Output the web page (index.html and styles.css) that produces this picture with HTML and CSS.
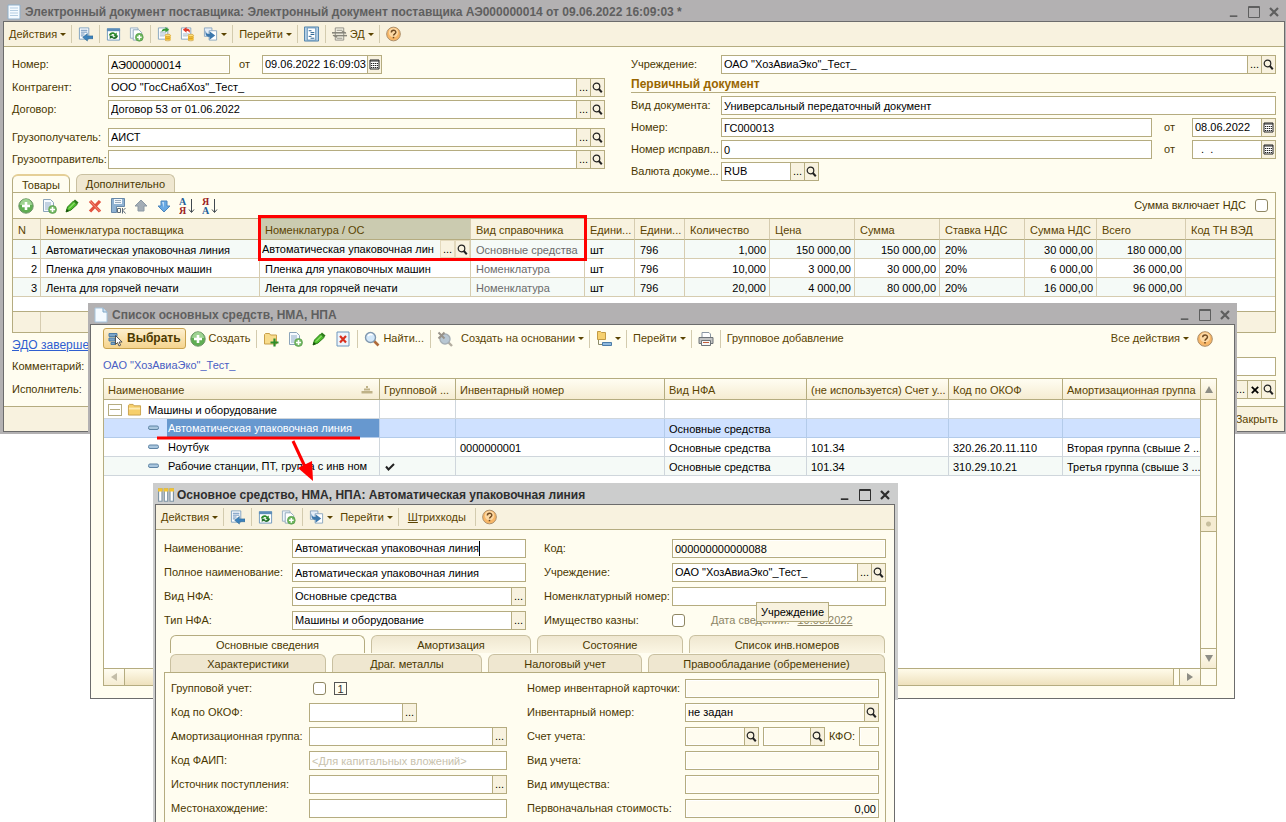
FILE: index.html
```html
<!DOCTYPE html>
<html lang="ru">
<head>
<meta charset="utf-8">
<title>Электронный документ поставщика</title>
<link rel="stylesheet" href="styles.css">
</head>
<body>
<svg class="sprite" aria-hidden="true">
  <symbol id="i-doc" viewBox="0 0 14 16"><path d="M1 1h12v14H1z" fill="#f4faff" stroke="#8fb0cc"/><path d="M3 4h8M3 6.500h8M3 9h8M3 11.500h8" stroke="#b4cde2"/></symbol>
  <symbol id="i-page" viewBox="0 0 14 16"><path d="M1 1h8l4 4v10H1z" fill="#f4faff" stroke="#a6c4dc"/><path d="M9 1v4h4" fill="#cfe2f2" stroke="#7fa6c6"/></symbol>
  <symbol id="i-table" viewBox="0 0 14 14"><path d="M.5 1.500h3v11h-3zM5.500 1.500h3v11h-3zM10.500 1.500h3v11h-3z" fill="#fff" stroke="#7d93a3"/><path d="M0 1h4v3H0zM5 1h4v3H5zM10 1h4v3h-4z" fill="#f3c331"/></symbol>
  <symbol id="i-save" viewBox="0 0 16 16"><path d="M1.500 1.500h10v12h-10z" fill="#fff" stroke="#7c9fc0"/><path d="M3 4h7M3 6h7M3 8h4M3 10h3" stroke="#5d88b4"/><path d="M5 11.500l5-4v2.500h6v3h-6v2.500z" fill="#3b82bd" stroke="#2a648f" stroke-width=".6"/></symbol>
  <symbol id="i-refresh" viewBox="0 0 16 16"><path d="M1.500 2.500h13v12h-13z" fill="#fff" stroke="#6f98bd"/><path d="M1 2h14v3H1z" fill="#5c8db9"/><path d="M3 9.500c1-4 5-4 7-2l1.500-1v4H8L9 8.800C8 7.500 6 8 5.500 9.500z" fill="#2c8a2c"/><path d="M13 9.500c-1 4.500-5.500 4.500-7.500 2.500L4 13.500V9.800h4L6.800 11c1.200 1 3 .8 3.500-1.500z" fill="#1f6e2a"/></symbol>
  <symbol id="i-copy" viewBox="0 0 16 16"><path d="M1.500 1.500h8v11h-8z" fill="#eef4fa" stroke="#9bb0c2"/><path d="M4.500 3.500h6l3 3v8h-9z" fill="#fff" stroke="#8da6bb"/><circle cx="11" cy="11.500" r="4.200" fill="#6cb65c" stroke="#4c9140" stroke-width=".6"/><path d="M11 9v5M8.500 11.500h5" stroke="#fff" stroke-width="1.600"/></symbol>
  <symbol id="i-docplus" viewBox="0 0 16 16"><path d="M2.500 1.500h7l3 3v9h-10z" fill="#f6faff" stroke="#8ca5ba"/><path d="M4 5h6M4 7h6M4 9h4M4 11h3" stroke="#8ca9c4"/><circle cx="11.500" cy="11.500" r="4" fill="#74ba64" stroke="#4c9140" stroke-width=".6"/><path d="M11.500 9v5M9 11.500h5" stroke="#fff" stroke-width="1.600"/></symbol>
  <symbol id="i-coins" viewBox="0 0 16 16"><path d="M1.500 1.500h10v12h-10z" fill="#fff" stroke="#86a4bf"/><path d="M3 6h7M3 8h7M3 10h5" stroke="#9db4ca"/><path d="M5 6C5 3 7 2.500 9 2.500V.5l4 3-4 3v-2C7.500 4.500 6 4.500 5 6z" fill="#379a37"/><path d="M8.500 9.500h6v5h-6z" fill="#f5bf35"/><ellipse cx="11.500" cy="9.500" rx="3" ry="1.300" fill="#ffe07a" stroke="#c48f1c" stroke-width=".6"/><path d="M8.500 12c1 1 5 1 6 0M8.500 14.500c1 1 5 1 6 0" fill="none" stroke="#c48f1c" stroke-width=".7"/></symbol>
  <symbol id="i-uncoins" viewBox="0 0 16 16"><path d="M1.500 1.500h10v12h-10z" fill="#fff" stroke="#86a4bf"/><path d="M3 8h7M3 10h5" stroke="#9db4ca"/><path d="M10 7C10 5 8.500 4.700 7 4.700v2l-4-3.200L7 .5v2c3 0 4.500 1.500 3 4.500z" fill="#e03b2c"/><path d="M8.500 9.500h6v5h-6z" fill="#f5bf35"/><ellipse cx="11.500" cy="9.500" rx="3" ry="1.300" fill="#ffe07a" stroke="#c48f1c" stroke-width=".6"/><path d="M8.500 12c1 1 5 1 6 0M8.500 14.500c1 1 5 1 6 0" fill="none" stroke="#c48f1c" stroke-width=".7"/></symbol>
  <symbol id="i-based" viewBox="0 0 16 16"><path d="M1.500 1.500h8v9h-8z" fill="#e4eef8" stroke="#8ba6bf"/><path d="M6.500 4.500h8v10h-8z" fill="#fff" stroke="#8ba6bf"/><path d="M3 4c0 3 1 4 4 4V5l6 4.500L7 14v-3C3 11 2 8 3 4z" fill="#3c78ac"/></symbol>
  <symbol id="i-list" viewBox="0 0 16 16"><path d="M.5.500h15v15H.5z" fill="#b5d0e6" stroke="#4b7fa9"/><path d="M3.500 1.500h9v13h-9z" fill="#fff" stroke="#5d8fb8"/><path d="M5 4.500h3M7 6.500h4M7 8.500h4M5 10.500h3M7 12.500h4" stroke="#1d5a8a"/></symbol>
  <symbol id="i-ed" viewBox="0 0 16 16"><path d="M3.500 1.500h9v13h-9z" fill="#f4f1e4" stroke="#8f8d84"/><path d="M5 4h6M5 12.500h6" stroke="#8f8d84"/><path d="M0 6.500h11V5l4 2H0zM16 10H5v1.500L1 9.500h15z" fill="#858379" stroke="#858379"/></symbol>
  <symbol id="i-help" viewBox="0 0 16 16"><circle cx="8" cy="8" r="7.300" fill="#f8b768" stroke="#a98b66"/><circle cx="8" cy="6.500" r="5" fill="#fdd9a4"/><path d="M5.700 6.300c0-3 4.800-3 4.800-.2C10.500 7.800 8 7.900 8 9.700" fill="none" stroke="#6f4a22" stroke-width="1.500"/><path d="M7.200 11h1.600v1.600H7.200z" fill="#6f4a22"/></symbol>
  <symbol id="i-plus" viewBox="0 0 16 16"><circle cx="8" cy="8" r="7.200" fill="#5fae52" stroke="#6e9468"/><path d="M2 7a6 6 0 0 1 12 0z" fill="#9fd392"/><path d="M8 4v8M4 8h8" stroke="#fff" stroke-width="2.600"/></symbol>
  <symbol id="i-pencil" viewBox="0 0 16 16"><path d="M2 14l1.500-5L9.500 3l3.500 3.500L7 12z" fill="#4fc02c" stroke="#2b7b19"/><path d="M5 10.500L11 4.500" stroke="#b4ef93"/><path d="M9.500 3l1.500-1.500 3.500 3-1.500 2z" fill="#2b7b19"/><path d="M2 14l.8-3 2.200 2z" fill="#174a0c"/></symbol>
  <symbol id="i-del" viewBox="0 0 16 16"><path d="M3 3l10 10.500M13 3L3 13.500" stroke="#e2533f" stroke-width="3.200"/><path d="M3 3l10 10.500" stroke="#f58d7c"/></symbol>
  <symbol id="i-saveok" viewBox="0 0 16 16"><path d="M1.500.500h13v8h-8v6h-5z" fill="#8fb2d2" stroke="#6788a8"/><path d="M4 1h8v5H4z" fill="#f3f8fc"/><path d="M5 2.500h6M5 4.500h6" stroke="#9ab"/><path d="M7.500 10.500h3v4h-3zM12.500 10v5.500M15.500 10l-2.500 2.500 2.500 3" fill="none" stroke="#5d6b78"/></symbol>
  <symbol id="i-up" viewBox="0 0 16 16"><path d="M8 2l6 6h-3v5H5V8H2z" fill="#a3adb5" stroke="#8b98a3"/></symbol>
  <symbol id="i-down" viewBox="0 0 16 16"><path d="M8 14L2 8h3V3h6v5h3z" fill="#67a9e4" stroke="#4f86bb"/><path d="M6 4h2v6z" fill="#bcdcf7"/></symbol>
  <symbol id="i-az" viewBox="0 0 16 18"><text x="0" y="8" class="sort-a">А</text><text x="0" y="17" class="sort-b">Я</text><path d="M12.500 2v13M10 12.500l2.500 3 2.500-3" fill="none" stroke="#40484f"/></symbol>
  <symbol id="i-za" viewBox="0 0 16 18"><text x="0" y="8" class="sort-b">Я</text><text x="0" y="17" class="sort-a">А</text><path d="M12.500 2v13M10 12.500l2.500 3 2.500-3" fill="none" stroke="#40484f"/></symbol>
  <symbol id="i-folder" viewBox="0 0 16 14"><path d="M1.500 2.500l1-1h4l1 1.500h7v10h-13z" fill="#f6cf6c" stroke="#c8a04a"/><path d="M2 5h12v2H2z" fill="#fdebb3"/></symbol>
  <symbol id="i-folderplus" viewBox="0 0 16 16"><path d="M1.500 3.500l1-1h4l1 1.500h6v9h-12z" fill="#f8dc8c" stroke="#c8a04a"/><path d="M11.500 7.500v8M7.500 11.500h8" stroke="#2f8d2b" stroke-width="2.200"/></symbol>
  <symbol id="i-docx" viewBox="0 0 14 16"><path d="M1 1h12v14H1z" fill="#eef5fc" stroke="#6f97bd"/><path d="M4 5l6 6.500M10 5l-6 6.500" stroke="#d9301f" stroke-width="2.200"/></symbol>
  <symbol id="i-find" viewBox="0 0 16 16"><path d="M10 10l4.500 4.500" stroke="#b06a3a" stroke-width="2.600"/><circle cx="6.500" cy="6.500" r="5" fill="#d3e8fa" stroke="#8198ae" stroke-width="1.400"/><path d="M4 5c1-1.500 3-2 4.500-1" fill="none" stroke="#fff" stroke-width="1.400"/></symbol>
  <symbol id="i-unfind" viewBox="0 0 16 16"><path d="M11 11l4 4" stroke="#b3ada0" stroke-width="2.400"/><circle cx="8" cy="8" r="5" fill="#b8c7d3" stroke="#a5aeb5" stroke-width="1.400"/><path d="M1.500 1.500l6 6M7.500 1.500l-6 6" stroke="#98938a" stroke-width="2"/></symbol>
  <symbol id="i-tree" viewBox="0 0 16 16"><path d="M1.500.500h3l1 1h4v7h-8z" fill="#f6d06e" stroke="#c39b44"/><path d="M2.500 9v4.500H6" fill="none" stroke="#8b8b6a"/><path d="M6.500 11.500h9v3h-9z" fill="#8fb9de" stroke="#4c7ca8"/></symbol>
  <symbol id="i-print" viewBox="0 0 16 16"><path d="M4 1.500h7l1.500 1.500v4H4z" fill="#fff" stroke="#8b97a3"/><path d="M1 6.500h14v6H1z" fill="#c3c4c4" stroke="#6f7478"/><path d="M3.500 9.500h9v5h-9z" fill="#f7f7f7" stroke="#6f7478"/><path d="M5 11.500h6" stroke="#c25d3a"/></symbol>
  <symbol id="i-select" viewBox="0 0 16 16"><path d="M1 2.500h8v3H1zM1 7h6v3H1zM3 11.500h4v2H3z" fill="#7da6c9" stroke="#4f7ea6"/><path d="M7.500 4.500v9l2-2 1.500 3.500 1.600-.8-1.500-3.200h3z" fill="#fff" stroke="#444" stroke-width=".9"/></symbol>
  <symbol id="i-mag" viewBox="0 0 11 11"><circle cx="4.500" cy="4.500" r="3.300" fill="none" stroke="#222" stroke-width="1.200"/><path d="M6.800 7l3 3.200" stroke="#222" stroke-width="2"/></symbol>
  <symbol id="i-cal" viewBox="0 0 11 11"><path d="M1 1h9v9H1z" fill="#fff" stroke="#222"/><path d="M1 2h9M2 4.500h7M2 6.500h7M2 8.500h7" stroke="#222"/><path d="M3.500 3v6M5.500 3v6M7.500 3v6" stroke="#fff" stroke-width=".7"/></symbol>
  <symbol id="i-item" viewBox="0 0 12 6"><rect x=".5" y="1" width="10" height="3.500" rx="1.500" fill="#a9c6de" stroke="#5f84a5"/></symbol>
  <symbol id="i-sorted" viewBox="0 0 12 8"><path d="M5 0h2v2H5zM3 2.500h6v2H3zM.5 5h11v2.500H.500z" fill="#bfb287"/></symbol>
  <symbol id="i-check" viewBox="0 0 10 8"><path d="M1 3.500l2.500 3L9 1" fill="none" stroke="#222" stroke-width="2"/></symbol>
  <symbol id="i-min" viewBox="0 0 10 12"><path d="M0 10h9v2H0z" fill="currentColor"/></symbol>
  <symbol id="i-max" viewBox="0 0 12 12"><path d="M.5.500h11v11H.5zM0 1.500h12" fill="none" stroke="currentColor"/></symbol>
  <symbol id="i-close" viewBox="0 0 10 10"><path d="M1 1l8 8M9 1L1 9" stroke="currentColor" stroke-width="2.200"/></symbol>
</svg>

<main class="desktop">

<section class="win win-doc">
  <header class="titlebar">
    <svg class="ico title-ico"><use href="#i-doc"/></svg>
    <h1 class="title">Электронный документ поставщика: Электронный документ поставщика АЭ000000014 от 09.06.2022 16:09:03 *</h1>
    <button class="wbtn" aria-label="Свернуть"><svg class="w10"><use href="#i-min"/></svg></button>
    <button class="wbtn" aria-label="Развернуть"><svg class="w12"><use href="#i-max"/></svg></button>
    <button class="wbtn" aria-label="Закрыть окно"><svg class="w10"><use href="#i-close"/></svg></button>
  </header>
  <div class="frame">
    <nav class="toolbar">
      <button class="tb menu">Действия<i class="caret"></i></button><i class="sep"></i>
      <button class="tb" aria-label="Записать"><svg class="ico"><use href="#i-save"/></svg></button><i class="sep"></i>
      <button class="tb" aria-label="Обновить"><svg class="ico"><use href="#i-refresh"/></svg></button>
      <button class="tb" aria-label="Скопировать"><svg class="ico"><use href="#i-copy"/></svg></button><i class="sep"></i>
      <button class="tb" aria-label="Провести"><svg class="ico"><use href="#i-coins"/></svg></button>
      <button class="tb" aria-label="Отменить проведение"><svg class="ico"><use href="#i-uncoins"/></svg></button>
      <button class="tb menu" aria-label="На основании"><svg class="ico"><use href="#i-based"/></svg><i class="caret"></i></button><i class="sep"></i>
      <button class="tb menu">Перейти<i class="caret"></i></button><i class="sep"></i>
      <button class="tb" aria-label="Список"><svg class="ico"><use href="#i-list"/></svg></button><i class="sep"></i>
      <button class="tb menu"><svg class="ico"><use href="#i-ed"/></svg>ЭД<i class="caret"></i></button><i class="sep"></i>
      <button class="tb" aria-label="Справка"><svg class="ico"><use href="#i-help"/></svg></button>
    </nav>
    <div class="doc-body">
      <div class="doc-form">
        <div class="col">
          <div class="row"><label for="num">Номер:</label>
            <div class="line">
              <input id="num" class="box ro num" value="АЭ000000014" readonly>
              <label for="dt" class="from">от</label>
              <div class="combo date-time"><input id="dt" value="09.06.2022 16:09:03"><button aria-label="Календарь"><svg><use href="#i-cal"/></svg></button></div>
            </div></div>
          <div class="row second"><label for="agent">Контрагент:</label>
            <div class="combo"><input id="agent" value='ООО "ГосСнабХоз"_Тест_'><button>...</button><button aria-label="Открыть"><svg><use href="#i-mag"/></svg></button></div></div>
          <div class="row"><label for="contract">Договор:</label>
            <div class="combo"><input id="contract" value="Договор 53 от 01.06.2022"><button>...</button><button aria-label="Открыть"><svg><use href="#i-mag"/></svg></button></div></div>
          <div class="row apart"><label for="to">Грузополучатель:</label>
            <div class="combo"><input id="to" value="АИСТ"><button>...</button><button aria-label="Открыть"><svg><use href="#i-mag"/></svg></button></div></div>
          <div class="row"><label for="fromwho">Грузоотправитель:</label>
            <div class="combo"><input id="fromwho"><button>...</button><button aria-label="Открыть"><svg><use href="#i-mag"/></svg></button></div></div>
          <div class="doc-tabs">
            <button class="tab on">Товары</button>
            <button class="tab">Дополнительно</button>
          </div>
        </div>
        <div class="col right">
          <div class="row"><label for="org">Учреждение:</label>
            <div class="combo"><input id="org" value='ОАО "ХозАвиаЭко"_Тест_'><button>...</button><button aria-label="Открыть"><svg><use href="#i-mag"/></svg></button></div></div>
          <h2 class="group">Первичный документ</h2>
          <div class="row"><label for="kind">Вид документа:</label><input id="kind" class="box" value="Универсальный передаточный документ"></div>
          <div class="row"><label for="pnum">Номер:</label>
            <div class="line"><input id="pnum" class="box grow" value="ГС000013"><label for="pdate" class="from">от</label>
              <div class="combo date"><input id="pdate" value="08.06.2022"><button aria-label="Календарь"><svg><use href="#i-cal"/></svg></button></div></div></div>
          <div class="row"><label for="fix">Номер исправл...</label>
            <div class="line"><input id="fix" class="box grow" value="0"><label for="fdate" class="from">от</label>
              <div class="combo date"><input id="fdate" value="  .  ."><button aria-label="Календарь"><svg><use href="#i-cal"/></svg></button></div></div></div>
          <div class="row"><label for="cur">Валюта докуме...</label>
            <div class="combo cur"><input id="cur" value="RUB"><button>...</button><button aria-label="Открыть"><svg><use href="#i-mag"/></svg></button></div></div>
        </div>
      </div>
      <div class="goods">
        <div class="goods-bar">
          <button class="gb" aria-label="Добавить"><svg class="ico"><use href="#i-plus"/></svg></button>
          <button class="gb" aria-label="Скопировать строку"><svg class="ico"><use href="#i-docplus"/></svg></button>
          <button class="gb" aria-label="Изменить"><svg class="ico"><use href="#i-pencil"/></svg></button>
          <button class="gb" aria-label="Удалить"><svg class="ico"><use href="#i-del"/></svg></button>
          <button class="gb" aria-label="Закончить редактирование"><svg class="ico"><use href="#i-saveok"/></svg></button>
          <button class="gb" aria-label="Вверх"><svg class="ico"><use href="#i-up"/></svg></button>
          <button class="gb" aria-label="Вниз"><svg class="ico"><use href="#i-down"/></svg></button>
          <button class="gb" aria-label="По возрастанию"><svg class="ico tall"><use href="#i-az"/></svg></button>
          <button class="gb" aria-label="По убыванию"><svg class="ico tall"><use href="#i-za"/></svg></button>
          <label for="vat" class="vat-label">Сумма включает НДС</label><input type="checkbox" id="vat" class="check">
        </div>
        <table class="grid goods-grid">
          <colgroup><col class="c28"><col class="c219"><col class="c211"><col class="c114"><col class="c50"><col class="c50"><col class="c85"><col class="c85"><col class="c85"><col class="c85"><col class="c72"><col class="c89"><col></colgroup>
          <thead><tr><th>N</th><th>Номенклатура поставщика</th><th class="cur-col">Номенклатура / ОС</th><th>Вид справочника</th><th>Едини...</th><th>Едини...</th><th>Количество</th><th>Цена</th><th>Сумма</th><th>Ставка НДС</th><th>Сумма НДС</th><th>Всего</th><th>Код ТН ВЭД</th></tr></thead>
          <tbody>
            <tr class="odd"><td class="r">1</td><td>Автоматическая упаковочная линия</td><td class="edit"><div class="cell-edit"><input aria-label="Номенклатура" value="Автоматическая упаковочная линия"><button>...</button><button aria-label="Открыть"><svg><use href="#i-mag"/></svg></button></div></td><td class="dim">Основные средства</td><td>шт</td><td>796</td><td class="r">1,000</td><td class="r">150 000,00</td><td class="r">150 000,00</td><td>20%</td><td class="r">30 000,00</td><td class="r">180 000,00</td><td></td></tr>
            <tr><td class="r">2</td><td>Пленка для упаковочных машин</td><td>Пленка для упаковочных машин</td><td class="dim">Номенклатура</td><td>шт</td><td>796</td><td class="r">10,000</td><td class="r">3 000,00</td><td class="r">30 000,00</td><td>20%</td><td class="r">6 000,00</td><td class="r">36 000,00</td><td></td></tr>
            <tr class="odd"><td class="r">3</td><td>Лента для горячей печати</td><td>Лента для горячей печати</td><td class="dim">Номенклатура</td><td>шт</td><td>796</td><td class="r">20,000</td><td class="r">4 000,00</td><td class="r">80 000,00</td><td>20%</td><td class="r">16 000,00</td><td class="r">96 000,00</td><td></td></tr>
            <tr class="blank"><td colspan="13"></td></tr>
          </tbody>
          <tfoot><tr><td></td><td></td><td></td><td></td><td></td><td></td><td></td><td></td><td></td><td></td><td></td><td></td><td></td></tr></tfoot>
        </table>
      </div>
      <div class="link-row"><a href="#edo">ЭДО завершен</a></div>
      <div class="row"><label for="comment">Комментарий:</label><input id="comment" class="box"></div>
      <div class="row author"><label for="author">Исполнитель:</label>
        <div class="combo"><input id="author"><button>...</button><button aria-label="Очистить"><svg class="w8"><use href="#i-close"/></svg></button><button aria-label="Открыть"><svg><use href="#i-mag"/></svg></button></div></div>
    </div>
    <footer class="doc-foot"><button class="tb">Закрыть</button></footer>
  </div>
</section>

<section class="win win-list">
  <header class="titlebar">
    <svg class="ico title-ico"><use href="#i-page"/></svg>
    <h1 class="title">Список основных средств, НМА, НПА</h1>
    <button class="wbtn" aria-label="Свернуть"><svg class="w10"><use href="#i-min"/></svg></button>
    <button class="wbtn" aria-label="Развернуть"><svg class="w12"><use href="#i-max"/></svg></button>
    <button class="wbtn" aria-label="Закрыть окно"><svg class="w10"><use href="#i-close"/></svg></button>
  </header>
  <div class="frame list-body">
    <nav class="listbar">
      <button class="primary"><svg class="ico"><use href="#i-select"/></svg>Выбрать</button>
      <button class="tb"><svg class="ico"><use href="#i-plus"/></svg>Создать</button><i class="sep"></i>
      <button class="tb wide" aria-label="Создать группу"><svg class="ico"><use href="#i-folderplus"/></svg></button>
      <button class="tb wide" aria-label="Скопировать"><svg class="ico"><use href="#i-docplus"/></svg></button>
      <button class="tb wide" aria-label="Изменить"><svg class="ico"><use href="#i-pencil"/></svg></button>
      <button class="tb wide" aria-label="Пометить на удаление"><svg class="ico"><use href="#i-docx"/></svg></button><i class="sep"></i>
      <button class="tb"><svg class="ico"><use href="#i-find"/></svg>Найти...</button><i class="sep"></i>
      <button class="tb" aria-label="Отменить поиск"><svg class="ico"><use href="#i-unfind"/></svg></button>
      <button class="tb menu">Создать на основании<i class="caret"></i></button><i class="sep"></i>
      <button class="tb menu" aria-label="Иерархия"><svg class="ico"><use href="#i-tree"/></svg><i class="caret"></i></button><i class="sep"></i>
      <button class="tb menu">Перейти<i class="caret"></i></button><i class="sep"></i>
      <button class="tb" aria-label="Печать"><svg class="ico"><use href="#i-print"/></svg></button><i class="sep"></i>
      <button class="tb">Групповое добавление</button>
      <button class="tb menu push">Все действия<i class="caret"></i></button>
      <button class="tb" aria-label="Справка"><svg class="ico"><use href="#i-help"/></svg></button>
    </nav>
    <p class="org">ОАО "ХозАвиаЭко"_Тест_</p>
    <div class="listbox">
      <div class="list-main">
        <table class="grid list-grid">
          <colgroup><col class="c276"><col class="c76"><col class="c209"><col class="c142"><col class="c142"><col class="c114"><col></colgroup>
          <thead><tr><th><span class="sorted">Наименование<svg><use href="#i-sorted"/></svg></span></th><th>Групповой ...</th><th>Инвентарный номер</th><th>Вид НФА</th><th>(не используется) Счет у...</th><th>Код по ОКОФ</th><th>Амортизационная группа</th></tr></thead>
          <tbody>
            <tr><td><span class="node root"><i class="minus"></i><svg class="fold"><use href="#i-folder"/></svg>Машины и оборудование</span></td><td></td><td></td><td></td><td></td><td></td><td></td></tr>
            <tr class="picked"><td class="flush"><span class="node leaf"><svg><use href="#i-item"/></svg><b>Автоматическая упаковочная линия</b></span></td><td></td><td></td><td>Основные средства</td><td></td><td></td><td></td></tr>
            <tr><td class="flush"><span class="node leaf"><svg><use href="#i-item"/></svg><b>Ноутбук</b></span></td><td></td><td>0000000001</td><td>Основные средства</td><td>101.34</td><td>320.26.20.11.110</td><td>Вторая группа (свыше 2 ...</td></tr>
            <tr class="odd"><td class="flush"><span class="node leaf"><svg><use href="#i-item"/></svg><b>Рабочие станции, ПТ, группа с инв ном</b></span></td><td><svg class="tick"><use href="#i-check"/></svg></td><td></td><td>Основные средства</td><td>101.34</td><td>310.29.10.21</td><td>Третья группа (свыше 3 ...</td></tr>
          </tbody>
        </table>
        <div class="hscroll"><button class="end" aria-label="Влево"><i class="arr left"></i></button><div class="hthumb"></div><button class="end" aria-label="Вправо"><i class="arr rightw"></i></button></div>
      </div>
      <div class="vscroll"><button class="end" aria-label="Вверх"><i class="arr upw"></i></button><div class="track"><div class="vthumb"></div></div><button class="end" aria-label="Вниз"><i class="arr downw"></i></button><div class="corner"></div></div>
    </div>
  </div>
</section>

<svg class="callout" viewBox="0 0 206 50" aria-hidden="true"><path d="M0 3h203" stroke="#f00" stroke-width="3"/><path d="M136 6l13 28" stroke="#f00" stroke-width="3"/><path d="M156 46l-15-13 14-7z" fill="#f00"/></svg>

<section class="win win-card">
  <header class="titlebar">
    <svg class="ico title-ico"><use href="#i-table"/></svg>
    <h1 class="title">Основное средство, НМА, НПА: Автоматическая упаковочная линия</h1>
    <button class="wbtn" aria-label="Свернуть"><svg class="w10"><use href="#i-min"/></svg></button>
    <button class="wbtn" aria-label="Развернуть"><svg class="w12"><use href="#i-max"/></svg></button>
    <button class="wbtn" aria-label="Закрыть окно"><svg class="w10"><use href="#i-close"/></svg></button>
  </header>
  <div class="frame">
    <nav class="toolbar">
      <button class="tb menu">Действия<i class="caret"></i></button><i class="sep"></i>
      <button class="tb" aria-label="Записать"><svg class="ico"><use href="#i-save"/></svg></button><i class="sep"></i>
      <button class="tb" aria-label="Обновить"><svg class="ico"><use href="#i-refresh"/></svg></button>
      <button class="tb" aria-label="Скопировать"><svg class="ico"><use href="#i-copy"/></svg></button><i class="sep"></i>
      <button class="tb menu" aria-label="На основании"><svg class="ico"><use href="#i-based"/></svg><i class="caret"></i></button>
      <button class="tb menu">Перейти<i class="caret"></i></button><i class="sep"></i>
      <button class="tb roomy"><span><u>Ш</u>трихкоды</span></button><i class="sep"></i>
      <button class="tb" aria-label="Справка"><svg class="ico"><use href="#i-help"/></svg></button>
    </nav>
    <div class="card-body">
      <div class="card-form">
        <div class="col">
          <div class="row"><label for="nm">Наименование:</label><div class="box typed"><span id="nm" class="typed-text" role="textbox" contenteditable="true">Автоматическая упаковочная линия</span></div></div>
          <div class="row"><label for="fnm">Полное наименование:</label><input id="fnm" class="box" value="Автоматическая упаковочная линия"></div>
          <div class="row"><label for="nfa">Вид НФА:</label><div class="combo"><input id="nfa" value="Основные средства"><button>...</button></div></div>
          <div class="row"><label for="tnfa">Тип НФА:</label><div class="combo"><input id="tnfa" value="Машины и оборудование"><button>...</button></div></div>
        </div>
        <div class="col">
          <div class="row"><label for="code">Код:</label><input id="code" class="box ro" value="000000000000088" readonly></div>
          <div class="row"><label for="org2">Учреждение:</label><div class="combo"><input id="org2" value='ОАО "ХозАвиаЭко"_Тест_'><button>...</button><button aria-label="Открыть"><svg><use href="#i-mag"/></svg></button></div></div>
          <div class="row"><label for="nomnum">Номенклатурный номер:</label><input id="nomnum" class="box"></div>
          <div class="row"><label for="kazna">Имущество казны:</label><div class="line"><input type="checkbox" id="kazna" class="check"><span class="info">Дата сведений:</span><a href="#date" class="info-date">10.08.2022</a></div></div>
          <div class="tooltip" role="tooltip">Учреждение</div>
        </div>
      </div>
      <div class="card-tabs first"><button class="tab on">Основные сведения</button><button class="tab">Амортизация</button><button class="tab">Состояние</button><button class="tab">Список инв.номеров</button></div>
      <div class="card-tabs second"><button class="tab">Характеристики</button><button class="tab">Драг. металлы</button><button class="tab">Налоговый учет</button><button class="tab">Правообладание (обременение)</button></div>
      <div class="card-panel">
        <div class="col">
          <div class="row"><label for="grp">Групповой учет:</label><div class="line pair"><input type="checkbox" id="grp" class="check"><span class="one">1</span></div></div>
          <div class="row"><label for="okof">Код по ОКОФ:</label><div class="combo okof"><input id="okof"><button>...</button></div></div>
          <div class="row"><label for="amort">Амортизационная группа:</label><div class="combo"><input id="amort"><button>...</button></div></div>
          <div class="row"><label for="faip">Код ФАИП:</label><input id="faip" class="box" placeholder="&lt;Для капитальных вложений&gt;"></div>
          <div class="row"><label for="src">Источник поступления:</label><div class="combo"><input id="src"><button>...</button></div></div>
          <div class="row"><label for="place">Местонахождение:</label><input id="place" class="box"></div>
        </div>
        <div class="col right">
          <div class="row"><label for="cardno">Номер инвентарной карточки:</label><input id="cardno" class="box ro" readonly></div>
          <div class="row"><label for="inv">Инвентарный номер:</label><div class="combo ro"><input id="inv" value="не задан" readonly><button aria-label="Открыть"><svg><use href="#i-mag"/></svg></button></div></div>
          <div class="row"><label for="acc">Счет учета:</label><div class="line accounts"><div class="combo ro acc-a"><input id="acc" readonly><button aria-label="Открыть"><svg><use href="#i-mag"/></svg></button></div><div class="combo ro acc-b"><input aria-label="Счет" readonly><button aria-label="Открыть"><svg><use href="#i-mag"/></svg></button></div><label for="kfo">КФО:</label><input id="kfo" class="box ro kfo" readonly></div></div>
          <div class="row"><label for="vu">Вид учета:</label><input id="vu" class="box ro" readonly></div>
          <div class="row"><label for="vi">Вид имущества:</label><input id="vi" class="box ro" readonly></div>
          <div class="row"><label for="cost">Первоначальная стоимость:</label><input id="cost" class="box ro num-r" value="0,00" readonly></div>
        </div>
      </div>
    </div>
  </div>
</section>

</main>
</body>
</html>
```

FILE: styles.css
```css
*, *::after { box-sizing: border-box; }
:root {
  --line: #b5ac80;
  --cream: #fffdf0;
  --bar: #f8f2df;
  --ink: #4a3800;
  --dark: #6c6c6c;
}
body {
  margin: 0;
  background: #fff;
  color: var(--ink);
  font: 11px/15px "Liberation Sans", Arial, sans-serif;
}
button, input { font: inherit; color: inherit; }
button { background: none; border: 0; padding: 0; white-space: nowrap; }
h1, h2, p { margin: 0; }
label { white-space: nowrap; }
svg { display: block; flex: none; }
.sprite { position: absolute; width: 0; height: 0; }
.ico { width: 16px; height: 16px; }
.ico.tall { height: 18px; }
.sort-a { font: bold 10px "Liberation Serif", serif; fill: #1e5f9a; }
.sort-b { font: bold 10px "Liberation Serif", serif; fill: #9c1f1f; }

.desktop { position: relative; height: 100vh; overflow: hidden; }
.win { position: absolute; background: #b3b1b2; }
.win-doc { left: 0; right: 0; top: 0; padding: 0 1px 2px 3px; }
.win-list {
  left: 88px; right: 49px; top: 303px; padding: 0 2px 1px;
  background: linear-gradient(#b3b1b2 131px, #fff 131px);
}
.win-card {
  left: 153px; right: 388px; top: 483px; padding: 0 3px 0 2px;
  background:
    linear-gradient(#cccdcd, #cccdcd) left top / 2px 100% no-repeat,
    linear-gradient(#cccdcd, #cccdcd) right top / 100% 217px no-repeat,
    #fff;
}
.frame { border: 1px solid var(--dark); background: var(--cream); }
.win-card .frame { border-bottom: 0; }

.titlebar { height: 21px; display: flex; align-items: center; padding: 2px 0 0 3px; color: #5f5f5f; }
.win-doc .titlebar { padding-right: 1px; }
.win-card .titlebar { color: #2e2e2e; }
.title-ico { margin-right: 3px; }
.title { flex: 1; font-size: 12px; line-height: 16px; white-space: nowrap; overflow: hidden; }
.wbtn { width: 20px; height: 16px; display: grid; place-items: center; }
.w10 { width: 10px; height: 10px; }
.w12 { width: 12px; height: 12px; }

.toolbar { height: 25px; display: flex; align-items: center; background: var(--bar); border-bottom: 1px solid var(--line); padding-left: 1px; }
.toolbar .ico { width: 15px; }
.tb { display: flex; align-items: center; gap: 3px; padding: 0 4px; height: 20px; color: #5a4300; }
.tb.menu { padding-right: 3px; }
.tb.roomy { padding: 0 7px; }
.caret { width: 0; height: 0; border: 3px solid transparent; border-top-color: #5a4300; border-bottom: 0; }
.sep { width: 1px; height: 18px; margin: 0 2px; background: #d3cbae; }

.row { display: grid; grid-template-columns: 96px minmax(0, 1fr); align-items: center; min-height: 19px; }
.col { display: flex; flex-direction: column; gap: 3px; min-width: 0; }
.box, .combo { height: 19px; width: 100%; border: 1px solid var(--line); background: #fff; color: #000; }
.box { padding: 0 2px; border-radius: 0; outline: 0; }
.combo { display: flex; min-width: 0; }
.combo input { flex: 1; min-width: 0; width: 0; border: 0; padding: 0 0 0 2px; background: none; outline: 0; }
.combo button { width: 14px; flex: none; display: grid; place-items: center; background: var(--bar); border-left: 1px solid var(--line); color: #000; }
.combo svg, .cell-edit svg { width: 11px; height: 11px; }
.combo svg.w8 { width: 8px; height: 8px; }
.ro { background: #fffcf0; box-shadow: inset 0 0 0 1px #fff; }
.line { display: flex; align-items: center; }
.check { appearance: none; width: 13px; height: 13px; margin: 0; flex: none; border: 1px solid #8f8763; border-radius: 3px; background: #fff; }

.doc-body { padding: 8px 8px 7px; }
.doc-form { display: grid; grid-template-columns: 593px minmax(0, 1fr); column-gap: 26px; }
.second { margin-top: 1px; }
.apart { margin-top: 6px; }
.doc-form .right .row { grid-template-columns: 90px minmax(0, 1fr); }
.num { width: 122px; }
.from { width: 32px; padding-left: 9px; }
.date-time { width: 120px; }
.right .from { width: 40px; padding-left: 12px; }
.grow { flex: 1; }
.date { width: 84px; }
.date input { white-space: pre; }
.cur { width: 98px; }
.group { height: 16px; line-height: 15px; font-size: 12px; color: #996600; border-bottom: 1px solid var(--line); }

.doc-tabs { display: flex; gap: 6px; margin-top: 2px; height: 18px; }
.tab { border: 1px solid #c9c0a0; border-bottom: 0; border-radius: 6px 6px 0 0; background: #efe7d0; color: var(--ink); }
.doc-tabs .tab { height: 18px; padding: 1px 9px 0; }
.doc-tabs .tab.on { height: 19px; background: var(--cream); border-color: var(--line); border-top: 2px solid #e5cf96; position: relative; }

.goods { position: relative; border: 1px solid var(--line); }
.goods-bar { height: 25px; display: flex; align-items: center; padding: 0 7px 0 1px; }
.gb { width: 23px; height: 22px; display: grid; place-items: center; }
.vat-label { margin-left: auto; margin-right: 9px; }

.grid { table-layout: fixed; border-collapse: separate; border-spacing: 0; width: 100%; }
.grid th, .grid td { padding: 1px 4px 0; border-right: 1px solid #d6ccb0; border-bottom: 1px solid #d6ccb0; text-align: left; font-weight: normal; white-space: nowrap; overflow: hidden; line-height: 16px; }
.grid td { height: 19px; color: #000; background: #fff; }
.grid th { color: #5a4300; background: var(--bar); border-bottom-color: var(--line); height: 21px; }
.grid tr > :last-child { border-right: 0; }
.grid .odd td { background: #f5faf7; }
.grid .r { text-align: right; padding-right: 3px; }
.grid .dim { color: #6b6b6b; }
.goods-grid { border-top: 1px solid var(--line); }
.goods-grid th, .goods-grid td { padding-left: 5px; }
.goods-grid thead .cur-col { background: #cbcbb0; }
.goods-grid .blank td { height: 15px; border-bottom-color: var(--line); }
.goods-grid tfoot td { height: 20px; background: var(--bar); border-bottom: 0; }
.goods-grid td.edit { padding: 0 0 0 2px; }
.cell-edit { display: flex; height: 18px; }
.cell-edit input { flex: 1; width: 0; min-width: 0; border: 0; padding: 0; margin-right: 6px; background: none; outline: 0; color: #000; }
.cell-edit button { width: 15px; display: grid; place-items: center; background: var(--bar); border: 1px solid #e3d9bc; }
.goods::after { content: ""; position: absolute; left: 245px; top: 22px; width: 329px; height: 46px; border: 3px solid #f00; pointer-events: none; }
.c28 { width: 28px; } .c219 { width: 219px; } .c211 { width: 211px; } .c114 { width: 114px; }
.c50 { width: 50px; } .c85 { width: 85px; } .c72 { width: 72px; } .c89 { width: 89px; }
.c276 { width: 276px; } .c76 { width: 76px; } .c209 { width: 209px; } .c142 { width: 142px; }

.link-row { height: 24px; line-height: 24px; }
.link-row a { color: #2f5fd0; font-size: 12px; }
.author { margin-top: 4px; }
.doc-foot { height: 25px; display: flex; justify-content: flex-end; align-items: center; background: var(--bar); border-top: 1px solid var(--line); padding-right: 2px; }

.list-body { padding: 0 17px 12px 12px; }
.listbar { height: 27px; display: flex; align-items: center; }
.push { margin-left: auto; }
.tb.push { padding-right: 4px; }
.primary { height: 21px; display: flex; align-items: center; gap: 3px; padding: 0 4px; font-weight: bold; font-size: 12px; color: #4a3800; border: 1px solid #c9a34f; border-radius: 3px; background: linear-gradient(#fdf0cf, #f5d48e); }
.org { height: 26px; line-height: 27px; color: #4a5fc4; }
.listbox { display: flex; border: 1px solid var(--line); background: #fff; height: 308px; }
.list-main { flex: 1; min-width: 0; display: flex; flex-direction: column; }
.list-grid th { height: 21px; border-color: var(--line); background: linear-gradient(#fffdf2, #f5ecd2); }
.list-grid td { border-color: #cfd6dc; }
.list-grid th:nth-child(n+2) { padding-right: 0; }
.list-grid .picked td { background: #cfe1ff; border-color: #b3cbea; }
.list-grid td:last-child { padding-right: 0; }
.sorted { display: flex; justify-content: space-between; align-items: center; }
.sorted svg { width: 12px; height: 8px; margin-right: 2px; }
.node { display: flex; align-items: center; }
.minus { width: 14px; height: 12px; margin-right: 5px; border: 1px solid var(--line); background: linear-gradient(var(--line), var(--line)) center / 10px 1px no-repeat; }
.fold { width: 15px; height: 13px; margin-right: 6px; }
.grid td.flush { padding: 0; }
.leaf { height: 18px; padding-left: 44px; }
.leaf svg { width: 12px; height: 6px; margin-right: 7px; }
.leaf b { flex: 1; font-weight: normal; line-height: 19px; padding-left: 1px; }
.picked b { background: #6798cf; color: #fff; }
.tick { width: 10px; height: 8px; margin-left: 1px; }
.hscroll { margin-top: auto; height: 17px; display: flex; border-top: 1px solid var(--line); background: var(--cream); }
.end { display: grid; place-items: center; background: linear-gradient(#fffdf2, #f5ecd2); flex: none; }
.hscroll .end { width: 21px; border: solid var(--line); border-width: 0 1px 0 0; }
.hscroll .end:last-child { border-width: 0 0 0 1px; }
.hthumb { flex: 1; margin-right: 5px; border-right: 1px solid var(--line); background: linear-gradient(#fffbea, #eee1bd); }
.vscroll { width: 16px; display: flex; flex-direction: column; border-left: 1px solid var(--line); background: var(--cream); }
.vscroll .end { height: 21px; border-bottom: 1px solid var(--line); }
.vscroll .end:nth-child(3) { border-top: 1px solid var(--line); }
.track { flex: 1; padding-top: 116px; }
.vthumb { height: 16px; border: solid var(--line); border-width: 1px 0; background: radial-gradient(circle, #c8bf9e 2px, #f5ecd2 3px); }
.corner { height: 16px; }
.arr { border: 4px solid transparent; }
.arr.left { border-right: 6px solid #c3bda8; border-left: 0; }
.arr.rightw { border-left: 6px solid #8d8d85; border-right: 0; }
.arr.upw { border-bottom: 7px solid #8d8d85; border-top: 0; }
.arr.downw { border-top: 7px solid #8d8d85; border-bottom: 0; }
.callout { position: absolute; left: 157px; top: 435px; width: 206px; height: 50px; }

.card-body { padding: 9px 8px 0; }
.card-form { display: grid; grid-template-columns: 362fr 342fr; column-gap: 18px; margin-bottom: 5px; }
.card-form .col, .card-panel .col { gap: 5px; }
.card-form .col { position: relative; }
.card-form .row { grid-template-columns: 128px minmax(0, 1fr); }
.typed { display: flex; align-items: center; }
.typed-text { border-right: 1px solid #000; white-space: nowrap; outline: 0; }
.info { margin-left: 26px; color: #8d8566; }
.info-date { margin-left: 8px; color: #8d8566; }
.tooltip { position: absolute; left: 212px; top: 63px; height: 20px; padding: 2px 4px; border: 1px solid var(--line); background: #f8f2df; color: #000; }
.card-tabs { display: grid; gap: 6px; height: 18px; padding: 0 1px 0 6px; }
.card-tabs .tab { padding-top: 1px; }
.card-tabs.first { grid-template-columns: 195fr 160fr 146fr 196fr; }
.card-tabs.second { grid-template-columns: 156fr 150fr 154fr 237fr; }
.first .tab { background: linear-gradient(#efe7d0, #fbf6e4); }
.first .tab.on { background: var(--cream); border-color: var(--line); }
.card-panel { border: 1px solid var(--line); border-bottom: 0; padding: 6px 6px 20px; display: grid; grid-template-columns: 336fr 352fr; column-gap: 20px; }
.card-panel .row { grid-template-columns: 138px minmax(0, 1fr); }
.card-panel .right .row { grid-template-columns: 158px minmax(0, 1fr); }
.pair { padding-left: 4px; gap: 8px; }
.one { width: 13px; height: 13px; border: 1px solid #555; line-height: 12px; text-align: center; color: #333; }
.okof { width: 108px; }
.accounts { gap: 4px; }
.acc-a { width: 74px; }
.acc-b { width: 62px; }
.kfo { width: 20px; margin-left: auto; }
.num-r { text-align: right; }
.box::placeholder { color: #c8c2ad; opacity: 1; }
```
